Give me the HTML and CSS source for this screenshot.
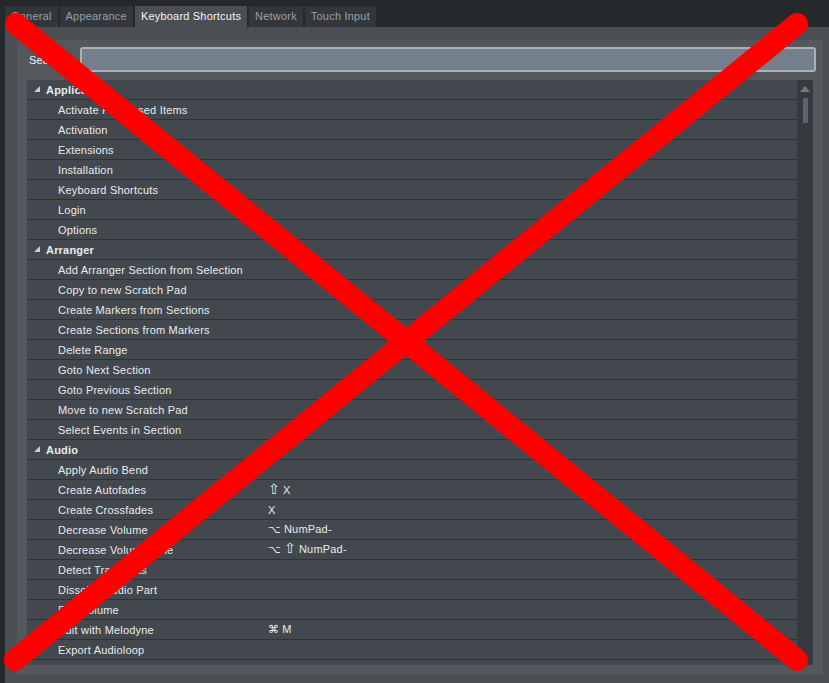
FILE: index.html
```html
<!DOCTYPE html>
<html>
<head>
<meta charset="utf-8">
<link rel="stylesheet" href="styles.css">
</head>
<body>
<div class="tabs">
  <div class="tab">General</div>
  <div class="tab">Appearance</div>
  <div class="tab active">Keyboard Shortcuts</div>
  <div class="tab">Network</div>
  <div class="tab">Touch Input</div>
</div>
<div class="panel">
  <div class="inner">
    <div class="search-row">
      <label class="search-label">Search</label>
      <div class="search-input"></div>
    </div>
    <div class="list">
      <div class="rows">
        <div class="row header"><span class="name"><svg class="tri" width="6" height="6" viewBox="0 0 6 6"><polygon points="6,0 6,6 0,6"/></svg>Application</span><span class="key"></span></div>
        <div class="row"><span class="name">Activate Purchased Items</span><span class="key"></span></div>
        <div class="row"><span class="name">Activation</span><span class="key"></span></div>
        <div class="row"><span class="name">Extensions</span><span class="key"></span></div>
        <div class="row"><span class="name">Installation</span><span class="key"></span></div>
        <div class="row"><span class="name">Keyboard Shortcuts</span><span class="key"></span></div>
        <div class="row"><span class="name">Login</span><span class="key"></span></div>
        <div class="row"><span class="name">Options</span><span class="key"></span></div>
        <div class="row header"><span class="name"><svg class="tri" width="6" height="6" viewBox="0 0 6 6"><polygon points="6,0 6,6 0,6"/></svg>Arranger</span><span class="key"></span></div>
        <div class="row"><span class="name">Add Arranger Section from Selection</span><span class="key"></span></div>
        <div class="row"><span class="name">Copy to new Scratch Pad</span><span class="key"></span></div>
        <div class="row"><span class="name">Create Markers from Sections</span><span class="key"></span></div>
        <div class="row"><span class="name">Create Sections from Markers</span><span class="key"></span></div>
        <div class="row"><span class="name">Delete Range</span><span class="key"></span></div>
        <div class="row"><span class="name">Goto Next Section</span><span class="key"></span></div>
        <div class="row"><span class="name">Goto Previous Section</span><span class="key"></span></div>
        <div class="row"><span class="name">Move to new Scratch Pad</span><span class="key"></span></div>
        <div class="row"><span class="name">Select Events in Section</span><span class="key"></span></div>
        <div class="row header"><span class="name"><svg class="tri" width="6" height="6" viewBox="0 0 6 6"><polygon points="6,0 6,6 0,6"/></svg>Audio</span><span class="key"></span></div>
        <div class="row"><span class="name">Apply Audio Bend</span><span class="key"></span></div>
        <div class="row"><span class="name">Create Autofades</span><span class="key"><span class="g shift">⇧</span> X</span></div>
        <div class="row"><span class="name">Create Crossfades</span><span class="key">X</span></div>
        <div class="row"><span class="name">Decrease Volume</span><span class="key"><span class="g">⌥</span> NumPad-</span></div>
        <div class="row"><span class="name">Decrease Volume Fine</span><span class="key"><span class="g">⌥</span> <span class="g shift">⇧</span> NumPad-</span></div>
        <div class="row"><span class="name">Detect Transients</span><span class="key"></span></div>
        <div class="row"><span class="name">Dissolve Audio Part</span><span class="key"></span></div>
        <div class="row"><span class="name">Edit Volume</span><span class="key"></span></div>
        <div class="row"><span class="name">Edit with Melodyne</span><span class="key"><span class="g">⌘</span> M</span></div>
        <div class="row"><span class="name">Export Audioloop</span><span class="key"></span></div>
        <div class="row"><span class="name"></span><span class="key"></span></div>
      </div>
      <div class="scrollbar">
        <svg class="arrow" width="10" height="6" viewBox="0 0 10 6"><polygon points="5,0 10,6 0,6"/></svg>
        <div class="thumb"></div>
      </div>
    </div>
  </div>
</div>
<svg class="cross" width="829" height="683" viewBox="0 0 829 683">
  <line x1="16" y1="24" x2="797" y2="660"/>
  <line x1="797" y1="24" x2="15" y2="660"/>
</svg>
</body>
</html>
```
FILE: styles.css
```css
html, body {
  margin: 0;
  padding: 0;
}
body {
  width: 829px;
  height: 683px;
  overflow: hidden;
  background: #26292c;
  font-family: "Liberation Sans", Arial, "DejaVu Sans", sans-serif;
  font-size: 11px;
  letter-spacing: 0.2px;
  position: relative;
}
.tabs {
  display: flex;
  gap: 2px;
  height: 27px;
  padding-left: 5px;
  align-items: flex-end;
  box-sizing: border-box;
}
.tab {
  height: 21px;
  line-height: 21px;
  padding: 0 6px;
  background: #33373b;
  color: #9aa0a6;
  white-space: nowrap;
}
.tab.active {
  background: #4b4f53;
  color: #f2f3f4;
}
.panel {
  margin-left: 5px;
  height: 656px;
  box-sizing: border-box;
  background: #4b4e52;
  padding: 13px 6px 8px 12px;
}
.inner {
  height: 100%;
  box-sizing: border-box;
  background: #54585c;
  padding: 7px 7px 10px 10px;
  display: flex;
  flex-direction: column;
  gap: 8px;
}
.search-row {
  display: flex;
  align-items: center;
  height: 25px;
  padding-left: 2px;
}
.search-label {
  color: #f0f1f2;
  width: 51px;
}
.search-input {
  flex: 1;
  height: 25px;
  box-sizing: border-box;
  background: #737f8b;
  border: 2px solid #adafb1;
  border-radius: 3px;
}
.list {
  flex: 1;
  display: flex;
  overflow: hidden;
  background: #42484e;
  margin-right: 3px;
}
.rows {
  flex: 1;
  overflow: hidden;
}
.row {
  height: 20px;
  box-sizing: border-box;
  border-bottom: 1px solid #2f3337;
  display: grid;
  grid-template-columns: 241px 1fr;
  align-items: center;
  color: #e9ebed;
  white-space: nowrap;
}
.row .name {
  padding-left: 31px;
}
.row.header .name {
  padding-left: 7px;
  font-weight: bold;
  display: flex;
  align-items: center;
}
.tri {
  fill: #c9ccd0;
  margin-right: 6px;
  margin-top: -2px;
}
.key {
  line-height: 14px;
}
.g {
  font-family: "DejaVu Sans", sans-serif;
  font-size: 11px;
  letter-spacing: 0;
}
.g.shift {
  font-size: 14px;
  line-height: 11px;
}
.scrollbar {
  width: 16px;
  background: #363a3e;
  display: flex;
  flex-direction: column;
  align-items: center;
  padding-top: 6px;
  box-sizing: border-box;
}
.arrow {
  fill: #737981;
}
.thumb {
  width: 5px;
  height: 25px;
  margin-top: 6px;
  background: #5e646b;
}
.cross {
  position: absolute;
  left: 0;
  top: 0;
  pointer-events: none;
}
.cross line {
  stroke: #ff0000;
  stroke-width: 22;
  stroke-linecap: round;
}
```
